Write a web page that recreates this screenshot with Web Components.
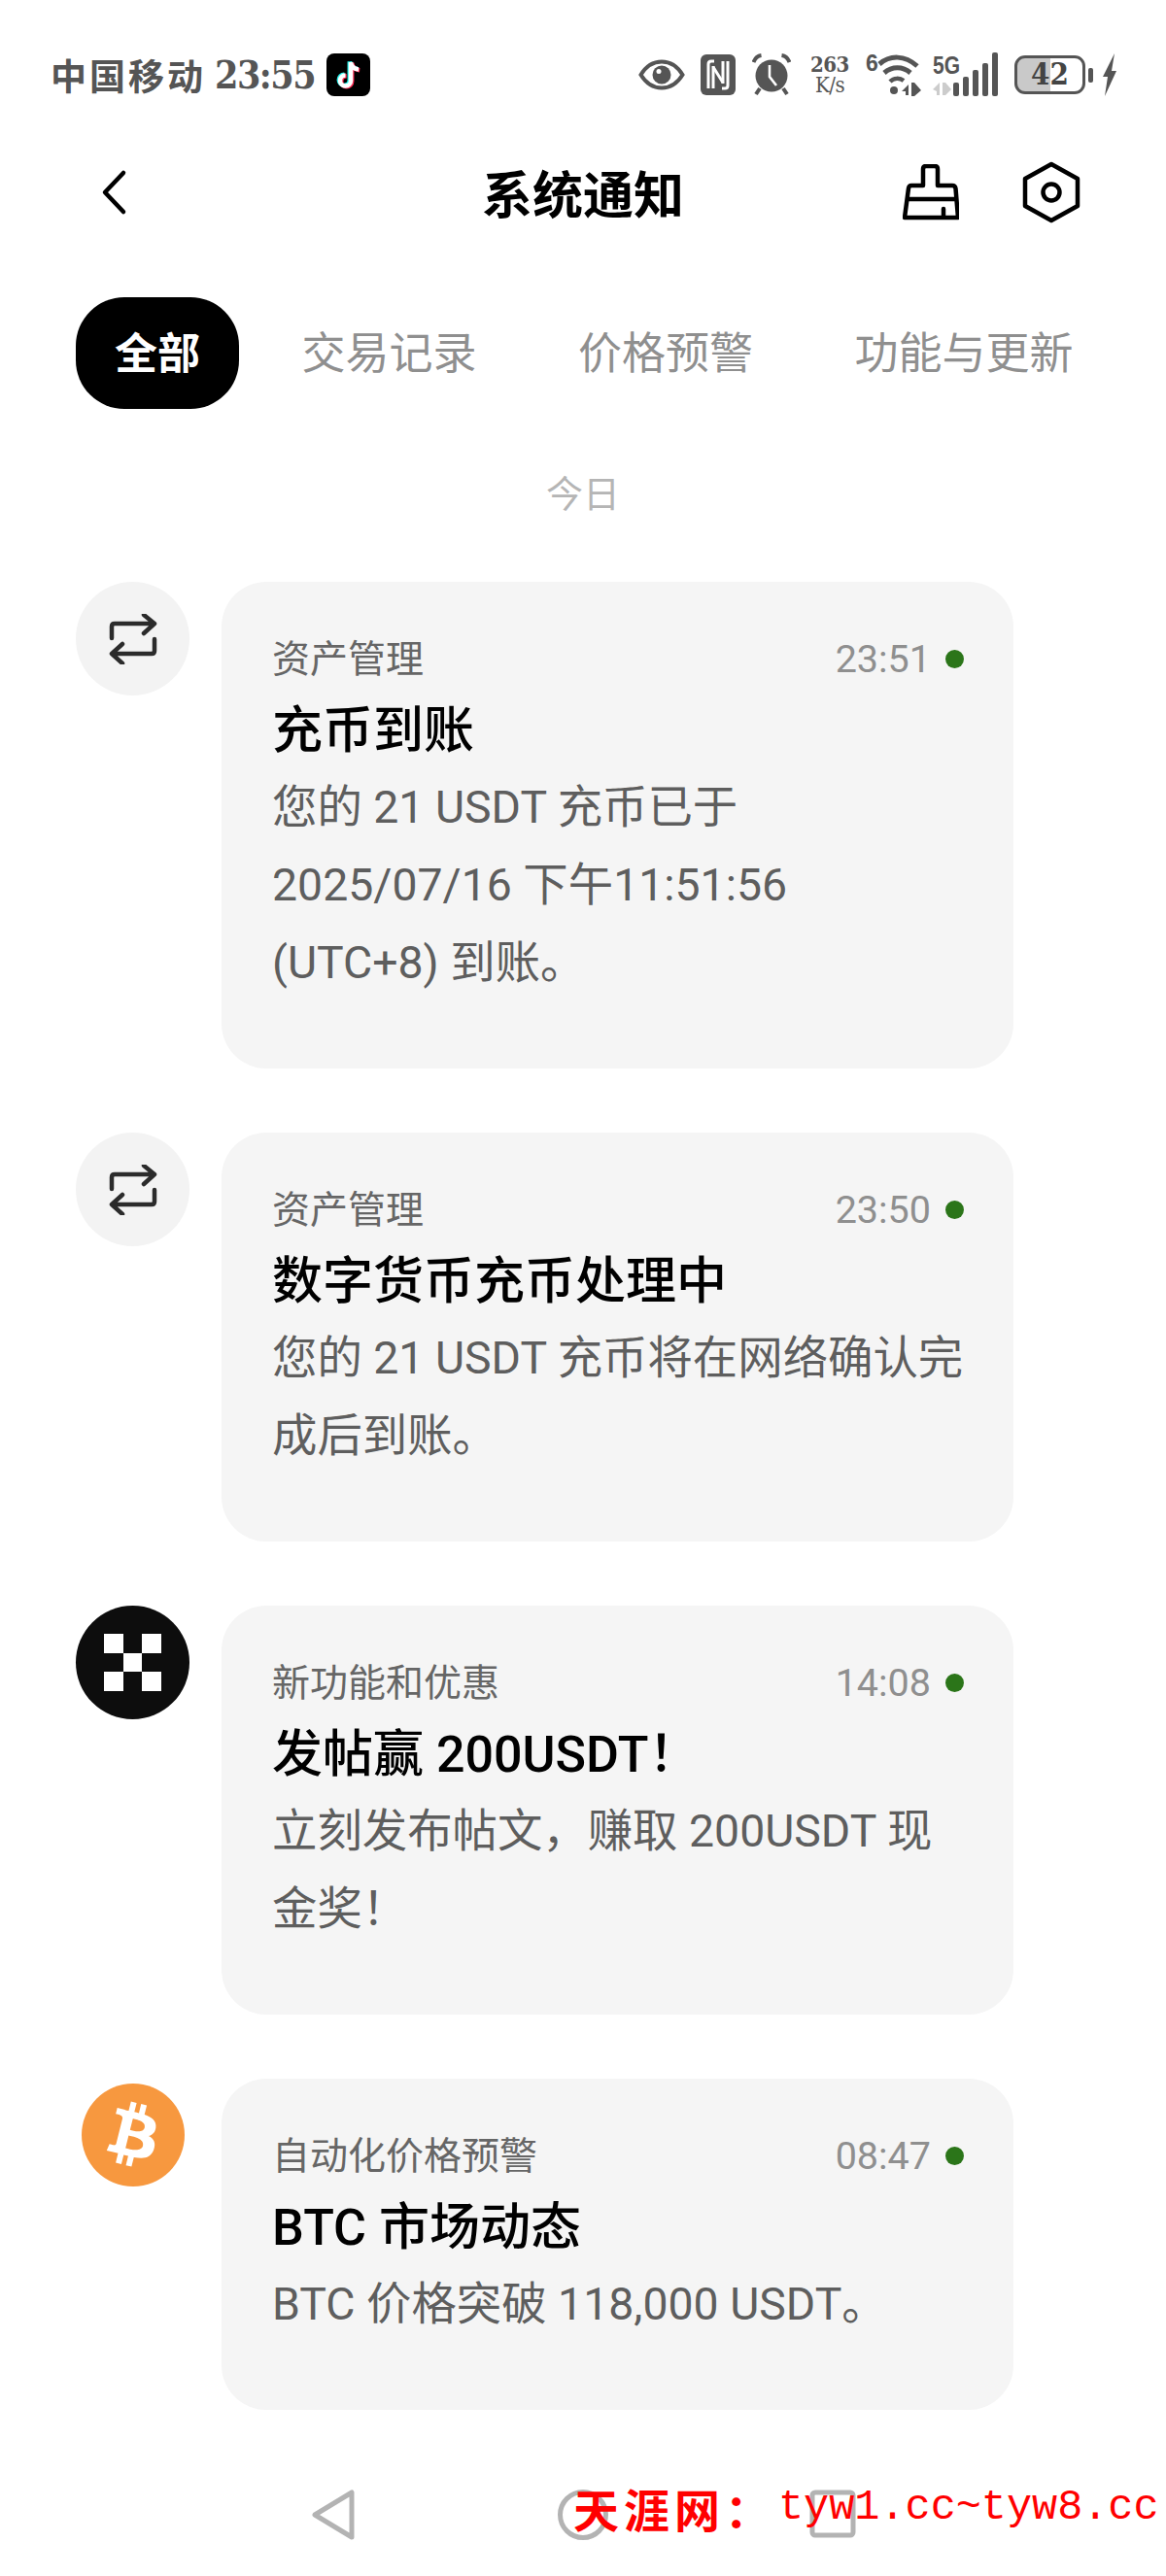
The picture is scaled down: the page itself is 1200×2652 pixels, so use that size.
<!DOCTYPE html>
<html lang="zh-CN">
<head>
<meta charset="utf-8">
<title>系统通知</title>
<style>
  html, body { margin: 0; padding: 0; background: #fff; }
  body { font-family: Roboto, "Noto Sans CJK SC", sans-serif; }
</style>
</head>
<body>
<app-screen>
  <status-bar></status-bar>
  <app-header>系统通知</app-header>
  <filter-tabs></filter-tabs>
  <date-label>今日</date-label>
  <notice-list>
    <notice-item cat="资产管理" time="23:51">
      <crypto-avatar slot="icon" kind="swap"></crypto-avatar>
      <span slot="title">充币到账</span>
      <span slot="body">您的 21 USDT 充币已于<br>2025/07/16 下午11:51:56<br>(UTC+8) 到账。</span>
    </notice-item>
    <notice-item cat="资产管理" time="23:50">
      <crypto-avatar slot="icon" kind="swap"></crypto-avatar>
      <span slot="title">数字货币充币处理中</span>
      <span slot="body">您的 21 USDT 充币将在网络确认完<br>成后到账。</span>
    </notice-item>
    <notice-item cat="新功能和优惠" time="14:08">
      <crypto-avatar slot="icon" kind="okx"></crypto-avatar>
      <span slot="title">发帖赢 200USDT！</span>
      <span slot="body">立刻发布帖文，赚取 200USDT 现<br>金奖！</span>
    </notice-item>
    <notice-item cat="自动化价格预警" time="08:47">
      <crypto-avatar slot="icon" kind="btc"></crypto-avatar>
      <span slot="title">BTC 市场动态</span>
      <span slot="body">BTC 价格突破 118,000 USDT。</span>
    </notice-item>
  </notice-list>
  <nav-bar></nav-bar>
  <water-mark></water-mark>
</app-screen>

<script>
class AppScreen extends HTMLElement {
  constructor() {
    super();
    this.attachShadow({ mode: "open" });
  }

  connectedCallback() {
    this.shadowRoot.innerHTML = /* html */`
    <style>
      :host {
        display: flex;
        flex-direction: column;
        position: relative;
        width: 1200px;
        height: 2652px;
        overflow: hidden;
        background: #fff;
      }
    </style>
    <slot></slot>`;
  }
}

class StatusBar extends HTMLElement {
  constructor() {
    super();
    this.attachShadow({ mode: "open" });
  }

  static get styles() {
    return /* css */`
      :host {
        display: flex;
        justify-content: space-between;
        align-items: center;
        height: 80px;
        margin-top: 37px;
        padding: 0 50px 0 52px;
        color: #555;
      }

      .left, .right { display: flex; align-items: center; }
      .right { gap: 17px; }

      .carrier {
        font: 700 37px/1 "Noto Sans CJK SC", sans-serif;
        letter-spacing: 3px;
        width: 169px;
        white-space: nowrap;
      }

      .clock {
        font: 700 39px/1 "DejaVu Serif Condensed", "DejaVu Serif", serif;
        letter-spacing: -1.5px;
        width: 115px;
      }

      .speed {
        width: 40px;
        margin-left: 3px;
        font: 700 22px/21px "DejaVu Serif Condensed", "Liberation Serif", serif;
        letter-spacing: -.5px;
        text-align: center;
      }

      .speed b { display: block; font-weight: 400; white-space: nowrap; }

      svg { display: block; }
      svg text { font-family: "Liberation Sans", sans-serif; font-weight: 700; }

      .wifi, .cell { margin-top: -12px; }
      .cell { margin-left: -5px; }

      .battery {
        position: relative;
        box-sizing: border-box;
        width: 73px;
        height: 40px;
        border: 3.5px solid #555;
        border-radius: 11px;
        background: linear-gradient(90deg, #c9c9c9 50%, #fff 50%);
        font: 700 31px/33px "DejaVu Serif Condensed", "DejaVu Serif", serif;
        color: #444;
        text-align: center;
      }

      .power { display: flex; align-items: center; gap: 3px; }
      .nub { width: 5px; height: 15px; background: #555; border-radius: 2px; }
      .bolt { margin-left: -8px; }
    `;
  }

  connectedCallback() {
    this.render();
  }

  render() {
    this.shadowRoot.innerHTML = /* html */`
    <style>${StatusBar.styles}</style>
    <div class="left">
      <span class="carrier">中国移动</span>
      <span class="clock">23:55</span>
      <svg width="45" height="44" viewBox="0 0 45 44">
        <rect width="45" height="44" rx="8" fill="#000"/>
        <path d="M25 9v19a5.5 5.5 0 1 1-5.5-5.5M25 9c.5 4.5 3.5 7 8 7.5" fill="none" stroke="#25f4ee" stroke-width="4.5" transform="translate(-1.2 -.8)"/>
        <path d="M25 9v19a5.5 5.5 0 1 1-5.5-5.5M25 9c.5 4.5 3.5 7 8 7.5" fill="none" stroke="#fe2c55" stroke-width="4.5" transform="translate(1.2 .8)"/>
        <path d="M25 9v19a5.5 5.5 0 1 1-5.5-5.5M25 9c.5 4.5 3.5 7 8 7.5" fill="none" stroke="#fff" stroke-width="4.5"/>
      </svg>
    </div>
    <div class="right">
      <svg width="48" height="36" viewBox="0 0 48 36">
        <path d="M2.5 18C8 9 15 4.500 24 4.500S40 9 45.500 18C40 27 33 31.500 24 31.500S8 27 2.500 18Z" fill="none" stroke="#555" stroke-width="4"/>
        <circle cx="24" cy="18" r="9.500" fill="#555"/>
        <circle cx="21" cy="14.500" r="2.500" fill="#fff"/>
      </svg>
      <svg width="36" height="42" viewBox="0 0 36 42" style="margin-left:-1px">
        <rect width="36" height="42" rx="6" fill="#555"/>
        <path d="M8 35V10q0-3 3-3h3M28 7v25q0 3-3 3h-3M13 13l10 16" fill="none" stroke="#fff" stroke-width="3"/>
        <path d="M13 12v23M23 7v23" fill="none" stroke="#fff" stroke-width="3"/>
      </svg>
      <svg width="40" height="44" viewBox="0 0 40 44">
        <circle cx="20" cy="23" r="16.500" fill="#555"/>
        <path d="M18 12v12l7 9" fill="none" stroke="#fff" stroke-width="2.600"/>
        <path d="M1.500 9C3 5 6 2.500 9.500 2M38.500 9C37 5 34 2.500 30.500 2" fill="none" stroke="#555" stroke-width="4"/>
        <path d="M8 36l-4 6M32 36l4 6" stroke="#555" stroke-width="4"/>
      </svg>
      <div class="speed">263<b>K/s</b></div>
      <svg class="wifi" width="57" height="56" viewBox="0 -12 57 56">
        <text x="0" y="18" font-size="23" fill="#555">6</text>
        <path d="M14 11C25 1.500 40 1.500 53 13" fill="none" stroke="#555" stroke-width="5"/>
        <path d="M19 20C27 13 38 13 46 20" fill="none" stroke="#555" stroke-width="5"/>
        <path d="M25 29C29 25 35 25 39 28" fill="none" stroke="#555" stroke-width="4.500"/>
        <circle cx="29" cy="38" r="4" fill="#555"/>
        <path d="M37 39l7-7v11h-3v-4zM47 30h3l7 8-7 6h-3z" fill="#555"/>
      </svg>
      <svg class="cell" width="67" height="58" viewBox="0 -12 67 58">
        <text x="0" y="22" font-size="26" textLength="28" lengthAdjust="spacingAndGlyphs" fill="#555">5G</text>
        <path d="M0 38l7-7v13h-3v-4zM10 31h3l6 7-6 6h-3z" fill="#ccc"/>
        <rect x="21" y="31" width="6" height="14" rx="2" fill="#555"/>
        <rect x="31" y="25" width="6" height="20" rx="2" fill="#555"/>
        <rect x="41" y="18" width="6" height="27" rx="2" fill="#555"/>
        <rect x="51" y="11" width="6" height="34" rx="2" fill="#555"/>
        <rect x="61" y="0" width="6" height="45" rx="2" fill="#555"/>
      </svg>
      <div class="power">
        <div class="battery">42</div>
        <div class="nub"></div>
      </div>
      <svg class="bolt" width="16" height="44" viewBox="0 0 16 44">
        <path d="M13 0L1 24h5L3 44l12-26h-5z" fill="#555"/>
      </svg>
    </div>`;
  }
}

class AppHeader extends HTMLElement {
  constructor() {
    super();
    this.attachShadow({ mode: "open" });
  }

  static get styles() {
    return /* css */`
      :host {
        display: grid;
        grid-template-columns: 1fr auto 1fr;
        align-items: center;
        height: 162px;
        padding: 0 88px;
      }

      .back { margin-left: 15px; }

      .title {
        font: 700 52px/1 "Noto Sans CJK SC", sans-serif;
        color: #000;
      }

      .actions {
        display: flex;
        justify-content: flex-end;
        align-items: center;
        gap: 65px;
      }

      svg { display: block; }
    `;
  }

  connectedCallback() {
    this.shadowRoot.innerHTML = /* html */`
    <style>${AppHeader.styles}</style>
    <svg class="back" width="28" height="48" viewBox="0 0 28 48">
      <path d="M24 4L5 24l19 20" fill="none" stroke="#000" stroke-width="4.500" stroke-linecap="round" stroke-linejoin="round"/>
    </svg>
    <div class="title"><slot></slot></div>
    <div class="actions">
      <svg width="58" height="58" viewBox="0 0 58 58">
        <path d="M21 22V5q0-3 3-3h9q3 0 3 3v17h15q3 0 3.500 3L57 55H2l4-30q.5-3 3-3zM5 36h48M42 55v-9" fill="none" stroke="#000" stroke-width="4.500" stroke-linejoin="round" stroke-linecap="round"/>
      </svg>
      <svg width="60" height="64" viewBox="0 0 60 64">
        <path d="M30 3l27 15v28L30 61 3 46V18z" fill="none" stroke="#000" stroke-width="4.500" stroke-linejoin="round"/>
        <circle cx="30" cy="32" r="8.500" fill="none" stroke="#000" stroke-width="4.500"/>
      </svg>
    </div>`;
  }
}

class FilterTabs extends HTMLElement {
  constructor() {
    super();
    this.attachShadow({ mode: "open" });
  }

  static get styles() {
    return /* css */`
      :host {
        display: flex;
        align-items: center;
        gap: 24.500px;
        margin-top: 27px;
        padding-left: 78px;
        font: 400 45px/112px Roboto, "Noto Sans CJK SC", sans-serif;
        color: #8f8f8f;
      }

      span { padding: 3px 40px 0; white-space: nowrap; }

      .active {
        background: #000;
        color: #fff;
        font-weight: 700;
        font-size: 44px;
        border-radius: 50px;
      }
    `;
  }

  connectedCallback() {
    this.shadowRoot.innerHTML = /* html */`
    <style>${FilterTabs.styles}</style>
    <span class="active">全部</span>
    <span>交易记录</span>
    <span>价格预警</span>
    <span>功能与更新</span>`;
  }
}

class DateLabel extends HTMLElement {
  constructor() {
    super();
    this.attachShadow({ mode: "open" }).innerHTML = /* html */`
    <style>
      :host {
        display: block;
        margin: 60px 0 68px;
        font: 400 38px/50px "Noto Sans CJK SC", sans-serif;
        color: #b5b5b5;
        text-align: center;
      }
    </style>
    <slot></slot>`;
  }
}

class NoticeList extends HTMLElement {
  constructor() {
    super();
    this.attachShadow({ mode: "open" }).innerHTML = /* html */`
    <style>
      :host {
        display: flex;
        flex-direction: column;
        gap: 66px;
        padding-left: 78px;
      }
    </style>
    <slot></slot>`;
  }
}

class NoticeItem extends HTMLElement {
  constructor() {
    super();
    this.attachShadow({ mode: "open" });
  }

  static get styles() {
    return /* css */`
      :host {
        display: flex;
        align-items: flex-start;
        gap: 33px;
        font-family: Roboto, "Noto Sans CJK SC", sans-serif;
      }

      .card {
        box-sizing: border-box;
        width: 815px;
        padding: 55px 51px 69px 52px;
        background: #f5f5f5;
        border-radius: 46px;
      }

      .meta {
        display: flex;
        justify-content: space-between;
        align-items: center;
        height: 50px;
        font-size: 39px;
        line-height: 50px;
        color: #666;
      }

      .time {
        display: flex;
        align-items: center;
        gap: 15px;
        color: #8f8f8f;
        font-size: 39.500px;
      }

      .dot {
        width: 19px;
        height: 19px;
        margin-bottom: 1px;
        border-radius: 50%;
        background: #2b7519;
      }

      .title {
        margin: 14px 0 3px;
        font-size: 52px;
        font-weight: 500;
        line-height: 70px;
        color: #000;
      }

      .body {
        font-size: 46.400px;
        line-height: 80px;
        color: #5e5e5e;
        white-space: nowrap;
      }
    `;
  }

  connectedCallback() {
    this.render();
  }

  render() {
    this.shadowRoot.innerHTML = /* html */`
    <style>${NoticeItem.styles}</style>
    <slot name="icon"></slot>
    <div class="card">
      <div class="meta">
        <span>${this.getAttribute("cat")}</span>
        <span class="time">${this.getAttribute("time")}<span class="dot"></span></span>
      </div>
      <div class="title"><slot name="title"></slot></div>
      <div class="body"><slot name="body"></slot></div>
    </div>`;
  }
}

class CryptoAvatar extends HTMLElement {
  constructor() {
    super();
    this.attachShadow({ mode: "open" });
  }

  static get icons() {
    return {
      swap: /* html */`
        <div class="disc" style="background:#f3f3f3">
          <svg width="50" height="52" viewBox="0 0 50 52">
            <path d="M3 25V13q0-3 3-3h40M36 1l11 9-11 10M47 26v12q0 3-3 3H4M14 31L3 41l11 10" fill="none" stroke="#2b2b2b" stroke-width="4.500" stroke-linecap="round" stroke-linejoin="round"/>
          </svg>
        </div>`,
      okx: /* html */`
        <div class="disc" style="background:#0d0d0d">
          <svg width="59" height="59" viewBox="0 0 3 3" shape-rendering="crispEdges">
            <path d="M0 0h1v1H0zM2 0h1v1H2zM1 1h1v1H1zM0 2h1v1H0zM2 2h1v1H2z" fill="#fff"/>
          </svg>
        </div>`,
      btc: /* html */`
        <div class="disc small" style="background:#f7983f">
          <svg width="106" height="106" viewBox="0 0 64 64">
            <path fill="#fff" d="M46.103 27.444c.637-4.258-2.605-6.547-7.038-8.074l1.438-5.768-3.511-.875-1.4 5.616c-.923-.23-1.871-.447-2.813-.662l1.41-5.653-3.509-.875-1.439 5.766c-.764-.174-1.514-.346-2.242-.527l.004-.018-4.842-1.209-.934 3.75s2.605.597 2.55.634c1.422.355 1.679 1.296 1.636 2.042l-1.638 6.571c.098.025.225.061.365.117l-.371-.092-2.296 9.205c-.174.432-.615 1.08-1.609.834.035.051-2.552-.637-2.552-.637l-1.743 4.019 4.569 1.139c.85.213 1.683.436 2.503.646l-1.453 5.834 3.507.875 1.439-5.772c.958.26 1.888.5 2.798.726l-1.434 5.745 3.511.875 1.453-5.823c5.987 1.133 10.489.676 12.384-4.739 1.527-4.36-.076-6.875-3.226-8.515 2.294-.529 4.022-2.038 4.483-5.155zm-8.022 11.249c-1.085 4.36-8.426 2.003-10.806 1.412l1.928-7.729c2.38.594 10.012 1.77 8.878 6.317zm1.086-11.312c-.99 3.966-7.1 1.951-9.082 1.457l1.748-7.01c1.982.494 8.365 1.416 7.334 5.553z"/>
          </svg>
        </div>`
    };
  }

  connectedCallback() {
    this.shadowRoot.innerHTML = /* html */`
    <style>
      :host { display: block; flex: none; width: 117px; height: 117px; }
      .disc {
        width: 117px;
        height: 117px;
        border-radius: 50%;
        display: flex;
        justify-content: center;
        align-items: center;
      }
      .small { width: 106px; height: 106px; margin: 5px 5.500px; }
      svg { display: block; }
    </style>
    ${CryptoAvatar.icons[this.getAttribute("kind")]}`;
  }
}

class NavBar extends HTMLElement {
  constructor() {
    super();
    this.attachShadow({ mode: "open" });
  }

  connectedCallback() {
    this.shadowRoot.innerHTML = /* html */`
    <style>
      :host {
        display: flex;
        justify-content: center;
        margin-top: 82px;
      }
      div { width: 257px; display: flex; justify-content: center; }
      svg { display: block; }
      * { fill: none; stroke: #b3b3b3; stroke-width: 5; stroke-linejoin: round; }
    </style>
    <div><svg width="44" height="52" viewBox="0 0 44 52"><path d="M41 3v46L3 26z"/></svg></div>
    <div><svg width="52" height="52" viewBox="0 0 52 52"><circle cx="26" cy="26" r="23.500"/></svg></div>
    <div><svg width="48" height="50" viewBox="0 0 48 50"><rect x="3" y="3" width="42" height="44" rx="3"/></svg></div>`;
  }
}

class WaterMark extends HTMLElement {
  constructor() {
    super();
    this.attachShadow({ mode: "open" });
  }

  connectedCallback() {
    this.shadowRoot.innerHTML = /* html */`
    <style>
      :host {
        position: absolute;
        left: 590px;
        top: 2552px;
        display: flex;
        align-items: center;
        height: 60px;
        color: #f00;
        white-space: nowrap;
      }
      .cn { font: 700 47px/60px "Noto Sans CJK SC", sans-serif; letter-spacing: 5px; width: 211px; }
      .url { font: 400 43.500px/60px "Liberation Mono", monospace; }
    </style>
    <span class="cn">天涯网：</span>
    <span class="url">tyw1.cc~tyw8.cc</span>`;
  }
}

customElements.define("app-screen", AppScreen);
customElements.define("status-bar", StatusBar);
customElements.define("app-header", AppHeader);
customElements.define("filter-tabs", FilterTabs);
customElements.define("date-label", DateLabel);
customElements.define("notice-list", NoticeList);
customElements.define("notice-item", NoticeItem);
customElements.define("crypto-avatar", CryptoAvatar);
customElements.define("nav-bar", NavBar);
customElements.define("water-mark", WaterMark);
</script>
</body>
</html>
